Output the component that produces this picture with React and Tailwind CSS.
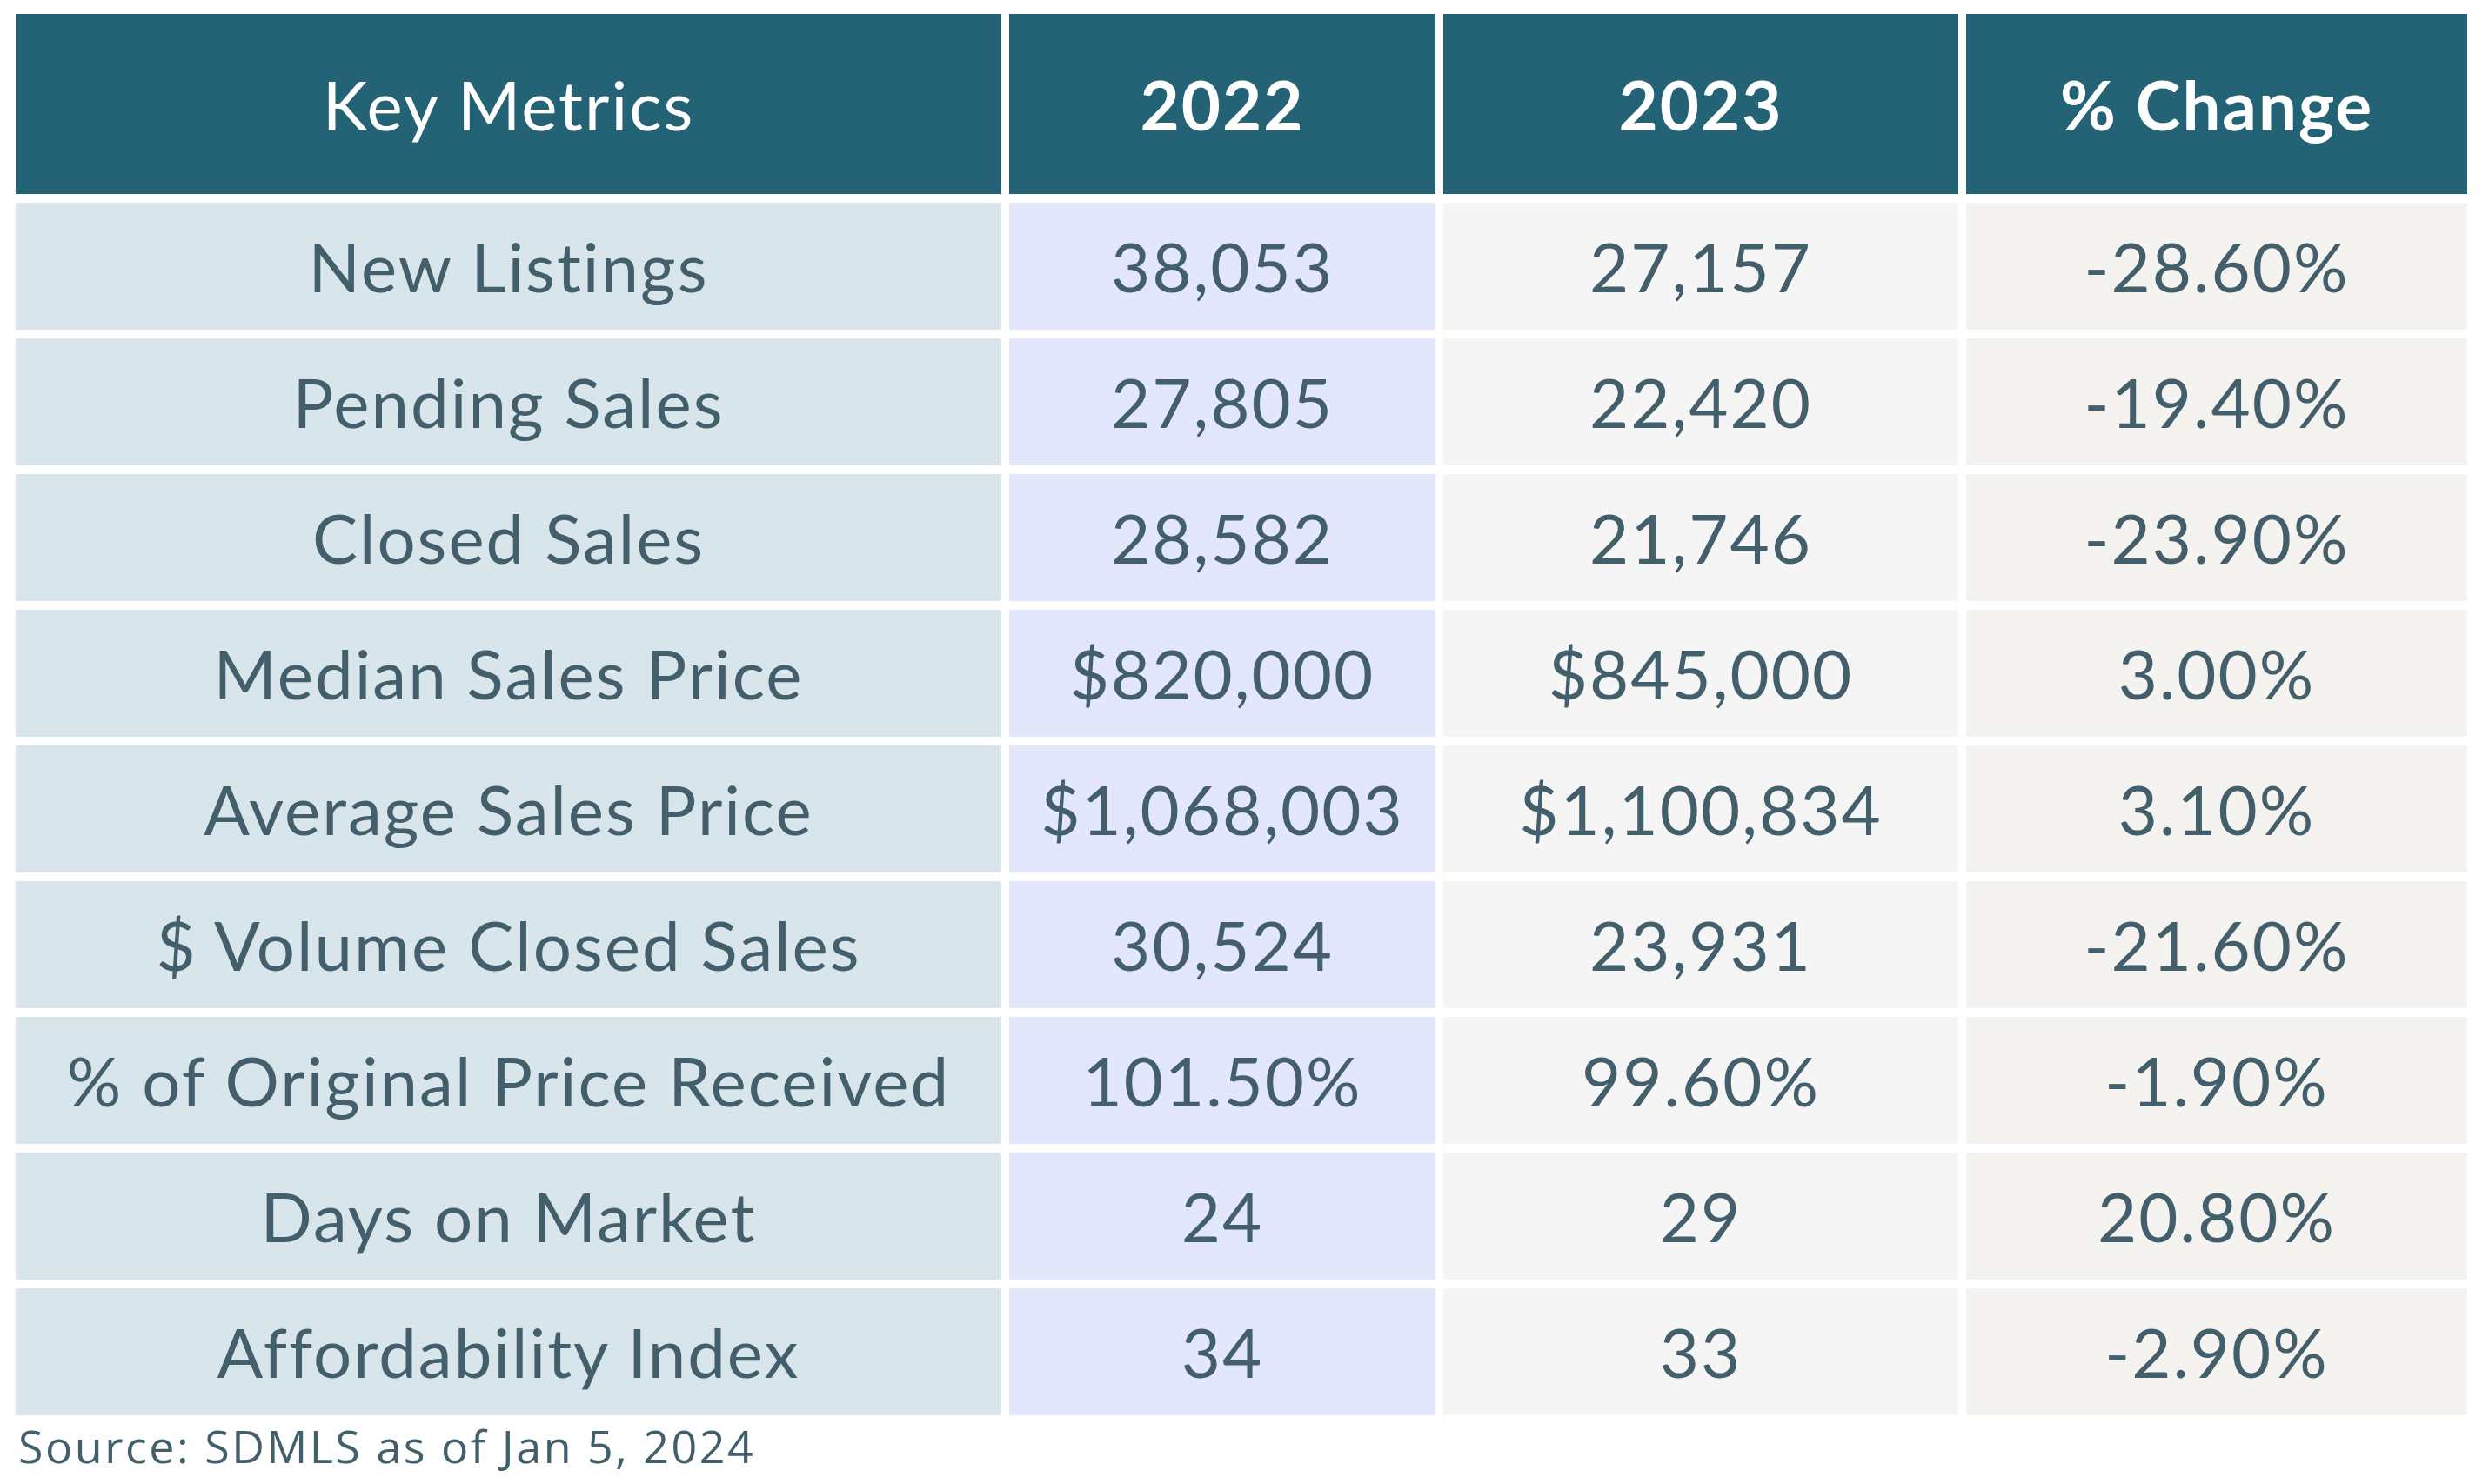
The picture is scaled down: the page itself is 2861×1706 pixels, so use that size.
const rows = [
  ["New Listings", "38,053", "27,157", "-28.60%"],
  ["Pending Sales", "27,805", "22,420", "-19.40%"],
  ["Closed Sales", "28,582", "21,746", "-23.90%"],
  ["Median Sales Price", "$820,000", "$845,000", "3.00%"],
  ["Average Sales Price", "$1,068,003", "$1,100,834", "3.10%"],
  ["$ Volume Closed Sales", "30,524", "23,931", "-21.60%"],
  ["% of Original Price Received", "101.50%", "99.60%", "-1.90%"],
  ["Days on Market", "24", "29", "20.80%"],
  ["Affordability Index", "34", "33", "-2.90%"],
];

const cell = "flex items-center justify-center h-[146px] text-[78px] leading-none tracking-[2px] text-[#435f6b]";
const head = "flex items-center justify-center h-[207px] bg-[#246275] text-white text-[78px] leading-none tracking-[2px]";

const App = () => {
  return (
    <div className="w-[2861px] h-[1706px] bg-white pt-[16px] pl-[18px] font-['Lato',sans-serif]">
      <div className="grid grid-cols-[1133px_490px_592px_576px] gap-x-[9px] gap-y-[10px]">
        <div className={`${head} font-normal`}>Key Metrics</div>
        <div className={`${head} font-bold`}>2022</div>
        <div className={`${head} font-bold`}>2023</div>
        <div className={`${head} font-bold`}>% Change</div>
        {rows.map((r) => (
          <>
            <div key={r[0]} className={`${cell} bg-[#d8e6ec]`}>{r[0]}</div>
            <div className={`${cell} bg-[#e2e7fb]`}>{r[1]}</div>
            <div className={`${cell} bg-[#f5f5f5]`}>{r[2]}</div>
            <div className={`${cell} bg-[#f5f3ef]`}>{r[3]}</div>
          </>
        ))}
      </div>
      <div className="mt-[9px] ml-[3px] text-[52px] leading-none tracking-[2.5px] text-[#435f6b] font-['Open_Sans',sans-serif]">
        Source: SDMLS as of Jan 5, 2024
      </div>
    </div>
  );
};

export default App;
